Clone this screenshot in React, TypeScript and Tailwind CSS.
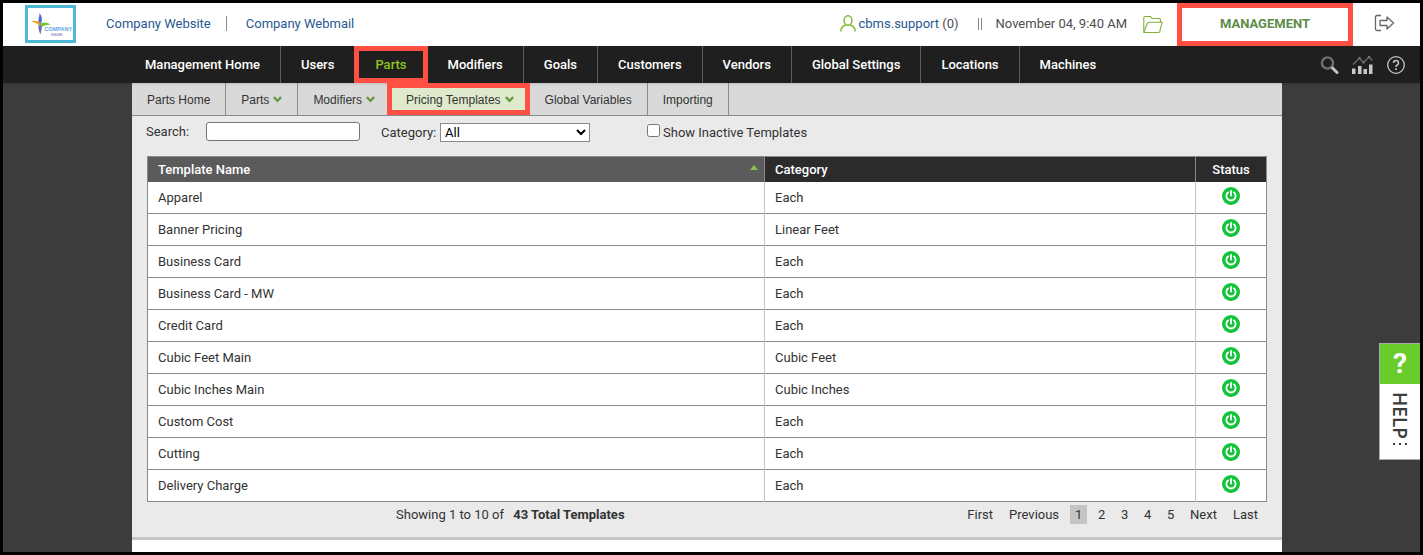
const navItems = ['Management Home', 'Users', 'Parts', 'Modifiers', 'Goals', 'Customers', 'Vendors', 'Global Settings', 'Locations', 'Machines'];

const subNavItems = [
    { label: 'Parts Home', menu: false },
    { label: 'Parts', menu: true },
    { label: 'Modifiers', menu: true },
    { label: 'Pricing Templates', menu: true },
    { label: 'Global Variables', menu: false },
    { label: 'Importing', menu: false },
];

const templates = [
    { name: 'Apparel', category: 'Each' },
    { name: 'Banner Pricing', category: 'Linear Feet' },
    { name: 'Business Card', category: 'Each' },
    { name: 'Business Card - MW', category: 'Each' },
    { name: 'Credit Card', category: 'Each' },
    { name: 'Cubic Feet Main', category: 'Cubic Feet' },
    { name: 'Cubic Inches Main', category: 'Cubic Inches' },
    { name: 'Custom Cost', category: 'Each' },
    { name: 'Cutting', category: 'Each' },
    { name: 'Delivery Charge', category: 'Each' },
];

const pages = ['1', '2', '3', '4', '5'];

function Logo() {
    return (
        <a href="#" aria-label="Company Name" className="mb-0.5 flex h-[38px] w-[51px] items-center justify-center border-[3px] border-[#4db8d4] bg-white">
            <svg viewBox="0 0 45 32" className="h-8 w-[45px]">
                <path d="M11.500 5c2.500 3 2.800 6 2 9l-1.500 3-1.500-3c-.5-3 1-5 1-9z" fill="#4f6bd0" />
                <path d="M10.500 17l2-2 1.500 2c0 4-.8 6-1.500 9.500-1.500-3-2.500-6-2-9.500z" fill="#6a6fc0" />
                <path d="M3 13.500c3.500-1.500 7-.8 9.500 2l-1 2c-2-1.800-5-3.300-8.500-4z" fill="#f2a21d" />
                <path d="M12 16c3.500-2 7-2 10.500.8-4-.3-6.500 1-9 2.500z" fill="#7cc242" />
                <text x="16.500" y="23" fontSize="5.500" fontWeight="700" fill="#62a5e2" fontFamily="Liberation Sans, sans-serif">COMPANY</text>
                <text x="23" y="27.500" fontSize="4" fontWeight="700" fill="#a09ac8" fontFamily="Liberation Sans, sans-serif">NAME</text>
            </svg>
        </a>
    );
}

function TopBar() {
    return (
        <header className="flex h-[43px] items-center bg-white pl-[22px] text-[#4d4d4d]">
            <Logo />
            <nav className="mb-0.5 ml-[30px] flex items-center text-[#27598f]">
                <a href="#">Company Website</a>
                <span className="mx-[15px] h-[15px] w-px bg-[#8a8a8a]" />
                <a href="#" className="ml-1">Company Webmail</a>
            </nav>
            <div className="ml-auto flex h-full items-center">
                <div className="mb-0.5 flex items-center">
                    <svg viewBox="0 0 16 17" className="mr-[3px] h-[17px] w-4" fill="none" stroke="#7ab929" strokeWidth="1.400">
                        <ellipse cx="8" cy="5.500" rx="4" ry="4.700" />
                        <path d="M.8 16.500c.2-4 2-5.600 5-6.500M15.200 16.500c-.2-4-2-5.600-5-6.500" />
                    </svg>
                    <span><a href="#" className="text-[#27598f]">cbms.support</a> (0)</span>
                    <span className="ml-[19px] h-3 w-1 border-x border-[#8a8a8a]" />
                    <span className="ml-[14px]">November 04, 9:40 AM</span>
                </div>
                <button type="button" aria-label="Files" className="ml-4">
                    <svg viewBox="0 0 20 19" className="h-[19px] w-5" fill="none" stroke="#7fb03a" strokeWidth="1.100" strokeLinejoin="round">
                        <path d="M.8 17V3Q.8 1.500 2 1.500H7.500l1.500 2H16.500l1 1V7" />
                        <path d="M.8 17.500 4.500 8q.3-.8 1.200-.8H19.200l-2.500 9.500q-.3.800-1.200.8z" />
                    </svg>
                </button>
                <button type="button" className="ml-[14px] h-full w-44 border-[5px] border-[#ff5043] pb-0.5 font-bold text-[#5c8c48]">MANAGEMENT</button>
                <button type="button" aria-label="Log out" className="mr-6 mb-1 ml-[21px]">
                    <svg viewBox="0 0 22 18" className="h-[18px] w-[22px]" fill="none" stroke="#666" strokeWidth="1.300" strokeLinejoin="round">
                        <path d="M7 1.500H3Q1.500 1.500 1.500 3v12q0 1.500 1.500 1.500h4" />
                        <path d="M6 6.500h7V3l6.500 6-6.500 6v-3.500H6z" />
                    </svg>
                </button>
            </div>
        </header>
    );
}

function MainNav() {
    return (
        <nav className="relative flex h-[37px] items-center bg-[#1f1f1f] pl-[129px] font-medium text-white shadow">
            {navItems.map((item, i) => (
                <div key={item} className={i === navItems.length - 1 ? 'relative h-full' : 'relative h-full border-r border-[#5c5c5c]'}>
                    <a href="#" className={`flex h-full items-center pr-5 ${i === 0 ? 'pl-[13px]' : 'pl-5'} ${item === 'Parts' ? 'text-[#8fc31f]' : ''}`}>
                        {item}
                    </a>
                    {item === 'Parts' && <span className="pointer-events-none absolute -inset-x-px inset-y-0 border-[5px] border-[#ff5043]" />}
                </div>
            ))}
            <div className="mr-[14px] ml-auto flex items-center gap-3">
                <button type="button" aria-label="Search">
                    <svg viewBox="0 0 20 20" className="h-5 w-5" fill="none">
                        <circle cx="7.500" cy="8" r="5.600" stroke="#707070" strokeWidth="2.400" />
                        <path d="m12.500 13 4.500 4.500" stroke="#c4c4c4" strokeWidth="3" strokeLinecap="round" />
                    </svg>
                </button>
                <button type="button" aria-label="Reports">
                    <svg viewBox="0 0 22 20" className="h-5 w-[22px]">
                        <path d="M1 9.500 7.500 3l4 4.500L17 2l3.500 3.500" fill="none" stroke="#666" strokeWidth="1.500" />
                        <path d="M0 13.500h3.500V19H0zM6 11h3.500v8H6zM11.500 14H15v5h-3.500zM17 9.500h3.500V19H17z" fill="#c8c8c8" />
                        <path d="M6.500 2h2v2h-2zM10.500 6.500h2v2h-2zM16 1h2v2h-2z" fill="#777" />
                    </svg>
                </button>
                <button type="button" aria-label="Help">
                    <svg viewBox="0 0 20 20" className="h-5 w-5" fill="none" stroke="#c4c4c4">
                        <circle cx="10" cy="10" r="8.300" strokeWidth="1.300" />
                        <path d="M7.500 8q0-2.500 2.500-2.500T12.500 8q0 1.200-1.300 2T10 12" strokeWidth="1.500" />
                        <path d="M10 13.300v1.700" strokeWidth="1.700" />
                    </svg>
                </button>
            </div>
        </nav>
    );
}

function SubNav() {
    return (
        <nav className="flex h-[33px] border-b border-[#8a8a8a] bg-[#d9d9d9] font-['Liberation_Sans',Arial,sans-serif] text-[12px] text-[#333]">
            {subNavItems.map(({ label, menu }) => (
                <div key={label} className="relative border-r border-[#8a8a8a]">
                    <a href="#" className={`flex h-full items-center gap-1 px-[15px] pt-0.5 ${label === 'Pricing Templates' ? 'bg-[#deeacb]' : ''}`}>
                        {label}
                        {menu && (
                            <svg viewBox="0 0 9 7" className="mb-0.5 h-[7px] w-[9px]" fill="none" stroke="#6a9a44" strokeWidth="2.400">
                                <path d="m.8 1.200 3.700 3.600 3.700-3.600" />
                            </svg>
                        )}
                    </a>
                    {label === 'Pricing Templates' && <span className="pointer-events-none absolute inset-y-0 -right-px -left-1 border-[5px] border-[#ff5043]" />}
                </div>
            ))}
        </nav>
    );
}

function Filters() {
    return (
        <form className="flex h-10 items-start pt-[6px] pl-[14px]">
            <label htmlFor="search" className="w-[60px] leading-5">Search:</label>
            <input id="search" type="text" className="h-[19px] w-[154px] rounded-[3px] border border-[#767676] bg-white px-1 text-[13px]" />
            <label htmlFor="category" className="ml-[21px] w-[59px] leading-[22px]">Category:</label>
            <select id="category" defaultValue="All" className="mt-px h-[19px] w-[150px] border border-[#8a8a8a] bg-white text-[13px] leading-4 text-black">
                <option>All</option>
                <option>Each</option>
                <option>Linear Feet</option>
                <option>Cubic Feet</option>
                <option>Cubic Inches</option>
            </select>
            <input id="inactive" type="checkbox" className="mt-[2px] ml-[57px] h-[13px] w-[13px]" />
            <label htmlFor="inactive" className="ml-[3px] leading-[22px]">Show Inactive Templates</label>
        </form>
    );
}

function StatusIcon() {
    return (
        <svg viewBox="0 0 18 18" className="h-[18px] w-[18px]" fill="none" stroke="#fff" strokeWidth="1.900" strokeLinecap="round">
            <circle cx="9" cy="9" r="9" fill="#12c43b" stroke="none" />
            <path d="M6 5.400a4.600 4.600 0 1 0 6 0M9 4v4.600" />
        </svg>
    );
}

function TemplatesTable() {
    return (
        <table className="mx-[15px] w-[calc(100%-30px)] table-fixed border-collapse border border-[#8a8a8a] bg-white">
            <thead>
                <tr className="h-[25px] bg-[#2b2b2b] text-left text-white">
                    <th className="border-r border-[#8a8a8a] bg-[#5b5b5b] px-[10px] font-medium">
                        <div className="flex justify-between">
                            Template Name
                            <svg viewBox="0 0 8 5" className="-mr-1 mt-[5px] h-[5px] w-2">
                                <path d="M0 5 4 0l4 5z" fill="#8cc152" />
                            </svg>
                        </div>
                    </th>
                    <th className="w-[431px] border-r border-[#8a8a8a] px-[10px] font-medium">Category</th>
                    <th className="w-[71px] text-center font-medium">Status</th>
                </tr>
            </thead>
            <tbody>
                {templates.map(({ name, category }) => (
                    <tr key={name} className="h-8 border-b border-[#8a8a8a]">
                        <td className="border-r border-[#c4c4c4] px-[10px]">{name}</td>
                        <td className="border-r border-[#c4c4c4] px-[10px]">{category}</td>
                        <td>
                            <button type="button" aria-label={`${name} is active`} className="mx-auto mb-[3px] block">
                                <StatusIcon />
                            </button>
                        </td>
                    </tr>
                ))}
            </tbody>
        </table>
    );
}

function TableFooter() {
    return (
        <div className="flex h-[38px] items-start border-b-[3px] border-[#c4c4c4] pt-[3px] pr-4 pl-[264px] leading-5">
            <p>Showing 1 to 10 of <strong className="ml-[6px] font-bold">43 Total Templates</strong></p>
            <div className="ml-auto flex">
                <button type="button" className="px-2">First</button>
                <button type="button" className="px-2">Previous</button>
                {pages.map((page) => (
                    <button key={page} type="button" className={page === '1' ? 'mx-[3px] h-[19px] w-[17px] bg-[#c4c4c4]' : 'w-[23px]'}>{page}</button>
                ))}
                <button type="button" className="px-2">Next</button>
                <button type="button" className="px-2">Last</button>
            </div>
        </div>
    );
}

function HelpTab() {
    return (
        <button type="button" className="absolute top-[340px] right-0 flex h-[117px] w-[41px] flex-col items-center border border-r-0 border-[#aaa] bg-white">
            <span className="flex h-10 w-full items-center justify-center bg-[#6acc2c] text-[28px] font-bold text-white">?</span>
            <span className="mt-2 font-['Open_Sans',sans-serif] text-[19px] leading-6 font-semibold text-[#3c3c3c] [writing-mode:vertical-rl]">HELP</span>
            <span className="mt-1 flex gap-1">
                <span className="size-0.5 bg-[#3c3c3c]" />
                <span className="size-0.5 bg-[#3c3c3c]" />
                <span className="size-0.5 bg-[#3c3c3c]" />
            </span>
        </button>
    );
}

export default function App() {
    return (
        <div className="relative min-h-screen border-[3px] border-black bg-[#3c3c3c] font-[Roboto,sans-serif] text-[13px] text-[#333]">
            <TopBar />
            <MainNav />
            <div className="pr-[138px] pl-[129px]">
                <main className="bg-[#eaeaea]">
                    <SubNav />
                    <Filters />
                    <TemplatesTable />
                    <TableFooter />
                    <div className="h-3 bg-white" />
                </main>
            </div>
            <HelpTab />
        </div>
    );
}
